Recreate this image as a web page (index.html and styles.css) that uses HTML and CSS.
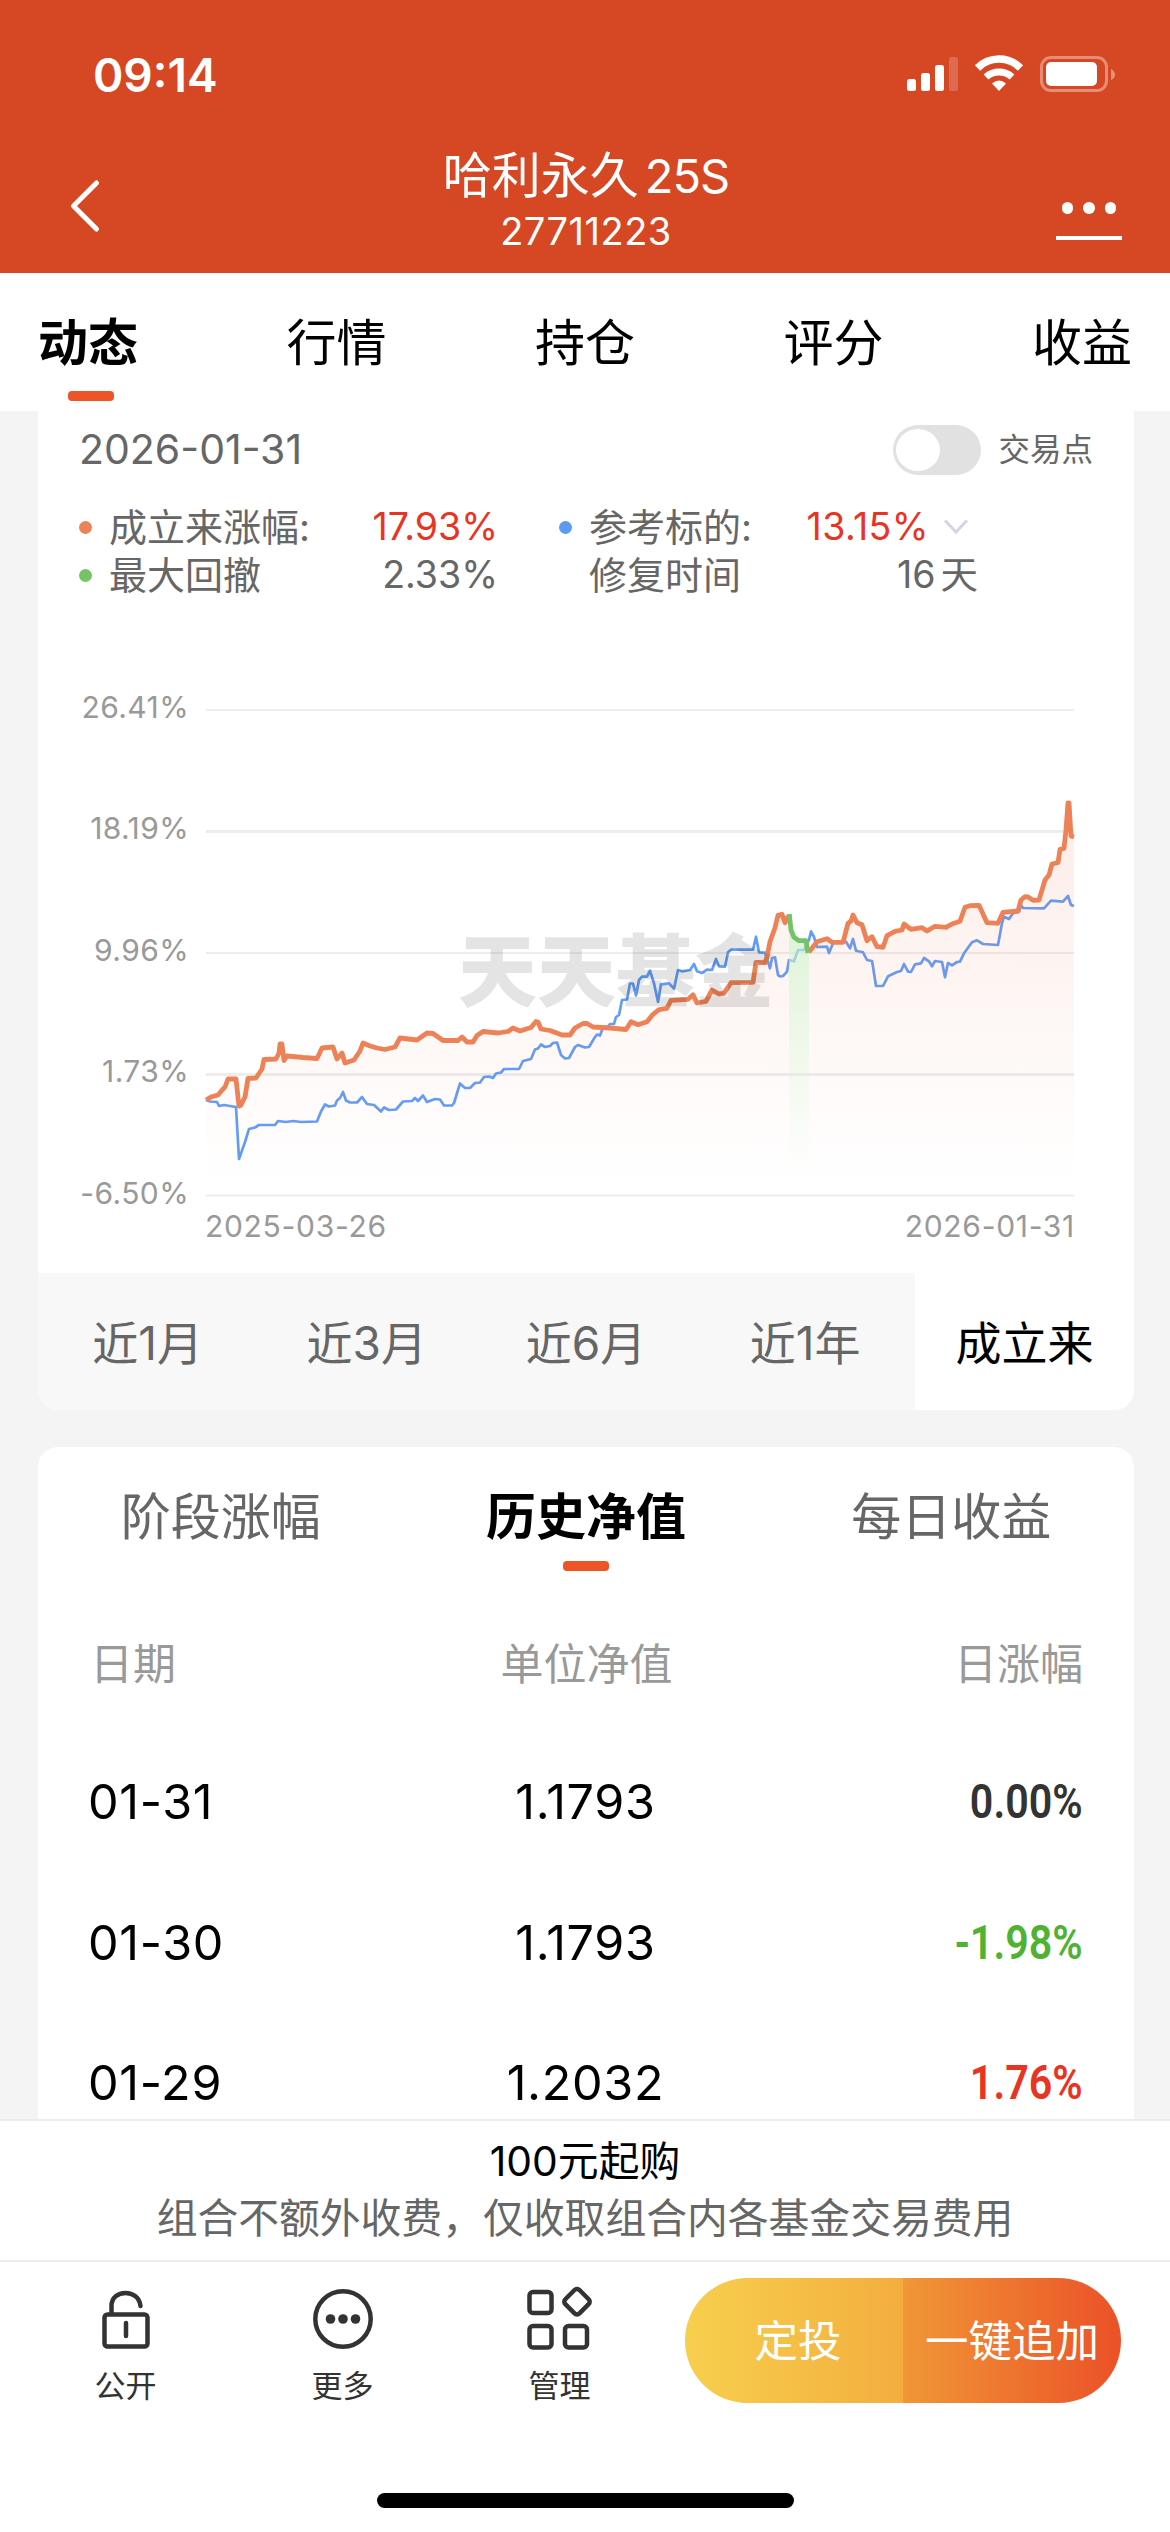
FILE: index.html
```html
<!DOCTYPE html>
<html lang="zh-CN">
<head>
    <meta charset="UTF-8">
    <meta name="viewport" content="width=device-width, initial-scale=1.0">
    <title>哈利永久25S</title>
    <link rel="stylesheet" href="styles.css">
</head>
<body>
    <header class="header">
        <div class="status-bar">
            <span class="time">09:14</span>
            <svg class="status-icons" width="210" height="44" viewBox="5 4 210 44">
                <g fill="#fff">
                    <rect x="7" y="29" width="9" height="12" rx="2.5"/>
                    <rect x="21" y="23" width="9" height="18" rx="2.5"/>
                    <rect x="35" y="15" width="9" height="26" rx="2.5"/>
                    <rect x="49" y="7" width="9" height="34" rx="2.5" opacity="0.2"/>
                    <path d="M92 33.5Q99 27.5 106 33.5L99 41Z"/>
                    <rect x="146" y="12" width="51" height="24" rx="5"/>
                    <path d="M211 19v11q4-2 4-5.500t-4-5.500z" opacity="0.4"/>
                </g>
                <g fill="none" stroke="#fff">
                    <path d="M77.500 18A30.200 30.200 0 0 1 120.500 18" stroke-width="7.500"/>
                    <path d="M86 27A19.300 19.300 0 0 1 112 27" stroke-width="7"/>
                    <rect x="141.500" y="7.500" width="65" height="33" rx="9.500" stroke-width="3" opacity="0.38"/>
                </g>
            </svg>
        </div>
        <div class="nav-bar">
            <svg class="back" width="34" height="56" viewBox="0 0 34 56">
                <path d="M28.500 5L5.500 28l23 23" fill="none" stroke="#fff" stroke-width="5" stroke-linecap="round" stroke-linejoin="round"/>
            </svg>
            <div class="nav-title">
                <div class="name">哈利永久<span class="suffix">25S</span></div>
                <div class="code">27711223</div>
            </div>
            <div class="more">
                <div class="more-dots"><i></i><i></i><i></i></div>
            </div>
        </div>
    </header>

    <nav class="tabs">
        <div class="tab active">动态</div>
        <div class="tab">行情</div>
        <div class="tab">持仓</div>
        <div class="tab">评分</div>
        <div class="tab">收益</div>
    </nav>

    <main class="content">
        <section class="card chart-card">
            <div class="date-row">
                <span class="date">2026-01-31</span>
                <span class="switch"></span>
                <span class="switch-label">交易点</span>
            </div>
            <div class="legend">
                <i class="dot orange"></i>
                <span>成立来涨幅:</span>
                <span class="value up">17.93%</span>
                <i class="dot blue"></i>
                <span>参考标的:</span>
                <span class="value up target">13.15%</span>
                <svg class="arrow" width="26" height="18" viewBox="0 0 26 18">
                    <path d="M2 2.500l11 11.500L24 2.500" fill="none" stroke="#d3d6e2" stroke-width="3"/>
                </svg>
                <i class="dot green"></i>
                <span>最大回撤</span>
                <span class="value">2.33%</span>
                <i></i>
                <span>修复时间</span>
                <span class="value days">16<b>天</b></span>
            </div>

            <svg class="chart" width="1096" height="573" viewBox="-168 0 1096 573">
                <defs>
                    <linearGradient id="areaFill" gradientUnits="userSpaceOnUse" x1="0" y1="100" x2="0" y2="485">
                        <stop offset="0" stop-color="#e8663a" stop-opacity="0.12"/>
                        <stop offset="1" stop-color="#e8663a" stop-opacity="0"/>
                    </linearGradient>
                    <linearGradient id="dropFill" gradientUnits="userSpaceOnUse" x1="0" y1="215" x2="0" y2="475">
                        <stop offset="0" stop-color="#ccf5cc" stop-opacity="0.7"/>
                        <stop offset="1" stop-color="#e0f8e0" stop-opacity="0"/>
                    </linearGradient>
                </defs>
                <g class="grid">
                    <path d="M0 10H868M0 253H868M0 495.500H868" stroke-width="2"/>
                    <path d="M0 131.500H868M0 374.500H868" stroke-width="3"/>
                </g>
                <g class="y-axis">
                    <text x="-17" y="18">26.41%</text>
                    <text x="-17" y="139">18.19%</text>
                    <text x="-17" y="261">9.96%</text>
                    <text x="-17" y="382">1.73%</text>
                    <text x="-17" y="504">-6.50%</text>
                </g>
                <g class="x-axis">
                    <text x="-1" y="537">2025-03-26</text>
                    <text x="869" y="537" text-anchor="end">2026-01-31</text>
                </g>
                <polyline class="line-index" points="0,400 4,401.500 11,402 13,406 18,405 30,407 33,459 39,442 43,429 49,427.500 53,425 69,425 72,421 80,422 87,421 95,422 111,421.500 115,411.500 119,404.500 123,406.500 129,405.500 131,400.500 134,398 137,392 140,400.500 144,402.500 151,402.500 156,397 161,404 168,405 175,411.500 178,407.500 183,410 190,409.500 197,401.500 206,401 209,398 212,401 217,395.500 221,402 229,399 234,399.500 238,405.500 246,405.500 248,403 254,383.500 259,388 264,388 269,383 274,382.500 278,377 283,376.500 287,378 290,373.500 295,372.500 298,369 313,369 317,361 325,359 329,349.500 332,348.500 335,344.500 339,347 344,346 347,343 351,342.500 355,355 359,358.500 363,358 369,347 372,345 379,347.500 383,347 389,337 391,334.500 394,335.500 397,327.500 402,326.500 404,324 408,324 410,317 413,315 416,300 421,299.500 424,283.500 427,283.500 430,295.500 433,280 436,276.700 441,276.700 444,270.700 448,283.300 452,302 455,284.300 463,283.300 468,288.700 472,270 476,271.300 484,270 488,264 491,271.300 496,273 501,269.700 506,270 510,259 513,266.300 519,266.700 522,252.300 525,249.700 547,249.700 550,236.700 553,252.300 559,252.700 564,268.300 566,258.300 569,257.300 572,275 574,276.300 577,276 581,271.700 583,260 588,261.300 592,250 598,250 601,243 603,240 605,231.300 608,237 611,247 621,246.700 623,253 627,243.300 631,242 640,241.700 644,248.300 647,239 650,250.700 657,252.300 661,260 666,261 667,266.700 670,286 677,286 682,276.300 691,272 695,271 698,264 702,271.700 705,272 709,264.300 715,263.300 718,258 723,261.300 726,266.300 729,261 736,262 739,277.300 742,263 746,265.300 751,262 754,261.700 758,253.300 766,242.300 771,240.300 777,244 792,245 796,223.300 798,216.700 803,219 807,213.300 813,211.700 815,205 817,208 838,208.300 845,200.700 857,201.700 862,196 865,205 868,206"/>
                <path fill="url(#areaFill)" d="M0 400L12 395 17 389 22 379 30 379 33 406 39 397 42 378 50 378 58 359 70 359 76 343 80 358 111 358 116 348 127 347 131 359 136 353 139 363 148 360 157 343 179 349 189 347 194 338 211 340 221 333 237 340 256 337 261 342 267 342 277 331 325 327 331 321 335 329 356 335 364 335 377 323 387 327 420 329 425 321 441 321 453 309 465 300 482 299 487 294 491 303 500 301 506 290 518 293 525 282 547 282 550 262 559 262 564 241 572 215 583 215 588 237 600 241 603 252 611 242 637 242 642 223 647 214 656 224 661 240 671 246 677 247 681 235 696 230 698 224 716 227 754 221 764 205 773 205 781 222 792 223 797 212 812 211 819 196 833 200 839 180 852 162 858 148 862 100 868 137V495H0Z"/>
                <path fill="url(#dropFill)" d="M583 215L588 237 600 241 603 252V495H583Z"/>
                <polyline class="line-fund" points="0,400 5,397 12,395 17,389 19,387 22,379 30,379 33,406 35,405 39,397 42,378.500 50,378 56,369 58,359.500 70,359 73,353 74,344 76,344 78,360.500 81,356 97,357.500 111,358.500 116,348 127,347 131,359 136,353 139,363 148,360 154,351 157,343 164,346 171,348 179,349.500 189,347 194,338 211,340 221,333 227,333.500 237,340.500 252,340.500 256,337 261,342 267,342 271,335.500 277,331.500 292,333 302,331.500 307,328 314,331 325,327.500 330,321.500 332,322 335,329 344,330.500 356,335 364,335 369,328 377,323.500 381,323.500 387,327 404,328 420,329.500 425,321.700 432,324.700 441,321.700 447,314.300 453,309.700 461,308.300 465,300.300 482,299.300 487,294.700 491,303 500,301.300 506,290 513,294 518,293.300 525,282.700 547,282.300 550,262.300 559,262.700 561,256.700 564,241.700 569,227.700 572,215.300 576,214.300 579,222.700 583,215.300"/>
                <polyline class="line-fund" points="603,252 611,241.700 621,238.700 626,242.300 637,242.300 642,223.300 645,221 647,215 651,222.700 656,224.700 661,240.700 666,236.700 671,246.700 677,247.300 681,235.700 689,231.300 696,230 698,224 705,229.300 716,227.700 721,231 729,226.300 740,227.300 746,224 754,221.300 759,207.300 764,205.700 773,205.300 776,211.700 781,222.700 792,223.300 797,212.300 812,211 815,200 819,196.700 822,197 827,200.300 833,200 839,180 843,175 846,164 852,162.700 854,149.300 858,148.300 860,130 862,103 863,103 865,136 868,137"/>
                <polyline class="line-drop" points="583.300,214 585,230 588,237.300 593,240.700 600,240.700 602,253"/>
                <text class="watermark" x="252" y="301">天天基金</text>
            </svg>

            <div class="ranges">
                <div class="range">近1月</div>
                <div class="range">近3月</div>
                <div class="range">近6月</div>
                <div class="range">近1年</div>
                <div class="range active">成立来</div>
            </div>
        </section>

        <section class="card history-card">
            <div class="sub-tabs">
                <div class="sub-tab">阶段涨幅</div>
                <div class="sub-tab active">历史净值</div>
                <div class="sub-tab">每日收益</div>
            </div>
            <div class="row row-head">
                <span>日期</span>
                <span>单位净值</span>
                <span>日涨幅</span>
            </div>
            <div class="row">
                <span>01-31</span>
                <span>1.1793</span>
                <span class="change">0.00%</span>
            </div>
            <div class="row">
                <span>01-30</span>
                <span>1.1793</span>
                <span class="change fall">-1.98%</span>
            </div>
            <div class="row">
                <span>01-29</span>
                <span>1.2032</span>
                <span class="change rise">1.76%</span>
            </div>
        </section>
    </main>

    <footer class="footer">
        <div class="notice">
            <div class="notice-main">100元起购</div>
            <div class="notice-sub">组合不额外收费，仅收取组合内各基金交易费用</div>
        </div>
        <div class="actions">
            <div class="action">
                <svg width="70" height="70" viewBox="0 0 70 70" fill="none" stroke="#333" stroke-width="4.500" stroke-linecap="round">
                    <rect x="13.500" y="30.500" width="43" height="32" rx="3"/>
                    <path d="M20.500 29V22C20.500 13.500 27 9 34.500 9C42 9 48.500 13.500 49.500 22M35 39v13"/>
                </svg>
                <span>公开</span>
            </div>
            <div class="action">
                <svg width="70" height="70" viewBox="0 0 70 70" fill="#333">
                    <circle cx="35" cy="35" r="27.700" fill="none" stroke="#333" stroke-width="4.500"/>
                    <circle cx="22.500" cy="35" r="4.800"/>
                    <circle cx="35" cy="35" r="4.800"/>
                    <circle cx="47.500" cy="35" r="4.800"/>
                </svg>
                <span>更多</span>
            </div>
            <div class="action">
                <svg width="70" height="70" viewBox="0 0 70 70" fill="none" stroke="#333" stroke-width="4.500">
                    <rect x="4.500" y="8" width="22" height="21" rx="3.500"/>
                    <rect x="4.500" y="42" width="22" height="21.500" rx="3.500"/>
                    <rect x="40" y="42" width="22" height="21.500" rx="3.500"/>
                    <rect x="42" y="7.700" width="20" height="20" rx="3.500" transform="rotate(45 52 17.700)"/>
                </svg>
                <span>管理</span>
            </div>
            <div class="buttons">
                <div class="btn btn-plan">定投</div>
                <div class="btn btn-add">一键追加</div>
            </div>
        </div>
        <div class="home-indicator"></div>
    </footer>
</body>
</html>
```
FILE: styles.css
```css
* {
    box-sizing: border-box;
}
body {
    margin: 0;
    width: 1170px;
    height: 2532px;
    overflow: hidden;
    display: flex;
    flex-direction: column;
    background: #f4f4f4;
    color: #000;
    font-family: Inter, "Noto Sans CJK SC", sans-serif;
}
svg {
    display: block;
}

/* header */
.header {
    height: 273px;
    flex: none;
    background: #d64724;
    color: #fff;
}
.status-bar {
    height: 140px;
    padding: 46px 55px 0 93px;
    display: flex;
    justify-content: space-between;
    align-items: flex-start;
}
.time {
    font-size: 46px;
    font-weight: 600;
    line-height: 58px;
}
.status-icons {
    margin-top: 8px;
}
.nav-bar {
    height: 133px;
    padding: 0 48px 0 68px;
    display: flex;
    justify-content: space-between;
}
.back {
    margin-top: 38px;
}
.nav-title {
    padding-left: 14px;
    text-align: center;
}
.name {
    font-size: 49px;
    line-height: 60px;
    margin-top: 6px;
}
.suffix {
    margin-left: 6px;
    font-size: 47px;
    letter-spacing: -1px;
}
.code {
    font-size: 38px;
    line-height: 50px;
    letter-spacing: 0.500px;
}
.more {
    width: 66px;
    height: 100px;
    border-bottom: 4px solid #fff;
}
.more-dots {
    padding-top: 62px;
    display: flex;
    justify-content: center;
    gap: 10px;
}
.more-dots i {
    width: 11.500px;
    height: 11.500px;
    border-radius: 50%;
    background: #fff;
}

/* top tabs */
.tabs {
    height: 138px;
    flex: none;
    padding: 0 38px;
    display: flex;
    justify-content: space-between;
    background: #fff;
}
.tab {
    width: 100px;
    padding-top: 35px;
    font-size: 50px;
    line-height: 70px;
    white-space: nowrap;
}
.tab.active,
.sub-tab.active {
    color: #000;
    font-weight: bold;
}
.tab.active::after,
.sub-tab.active::after {
    content: "";
    display: block;
    width: 46px;
    height: 10px;
    border-radius: 4px;
    background: #ed5428;
}
.tab.active::after {
    margin: 13px 0 0 30px;
}

.content {
    flex: 1;
    min-height: 0;
    overflow: hidden;
    padding: 0 36px 0 38px;
}
.card {
    background: #fff;
    overflow: hidden;
}

/* chart card */
.chart-card {
    height: 999px;
    border-radius: 0 0 20px 20px;
}
.date-row {
    height: 90px;
    padding: 14px 41px 0 41px;
    display: flex;
    align-items: flex-start;
    color: #666;
}
.date {
    flex: 1;
    font-size: 41px;
    line-height: 48px;
}
.switch {
    width: 88px;
    height: 50px;
    padding: 4px 3px;
    border-radius: 25px;
    background: #e1e1e1;
}
.switch::before {
    content: "";
    display: block;
    width: 44px;
    height: 42px;
    border-radius: 50%;
    background: #fff;
}
.switch-label {
    margin-left: 17px;
    font-size: 31.500px;
    line-height: 50px;
}
.legend {
    height: 199px;
    padding: 2px 0 0 41px;
    display: grid;
    grid-template-columns: 30px 220px 230px 30px 200px 154px 1fr;
    grid-auto-rows: 48px;
    align-items: center;
    align-content: start;
    font-size: 38px;
    line-height: 48px;
    color: #666;
    white-space: nowrap;
}
.value {
    padding-right: 61px;
    text-align: right;
    font-size: 37.500px;
}
.value.up {
    color: #e93323;
}
.value.target {
    padding-right: 14px;
    letter-spacing: 0.400px;
}
.value.days {
    grid-column: 6 / 8;
    padding-right: 156px;
}
.days b {
    margin-left: 5px;
    font-weight: normal;
}
.dot {
    width: 13px;
    height: 13px;
    border-radius: 50%;
}
.orange {
    background: #ee8257;
}
.blue {
    background: #5b9af7;
}
.green {
    background: #74c365;
}

.chart {
    overflow: visible;
}
.grid path {
    stroke: #ededed;
    fill: none;
}
.y-axis,
.x-axis {
    font-size: 30px;
    fill: #999;
}
.y-axis {
    text-anchor: end;
    letter-spacing: 0.400px;
}
.x-axis {
    letter-spacing: 0.700px;
}
.line-index,
.line-fund,
.line-drop {
    fill: none;
    stroke-linejoin: round;
}
.line-index {
    stroke: #639df5;
    stroke-width: 2.700;
}
.line-fund {
    stroke: #ee8257;
    stroke-width: 4.800;
}
.line-drop {
    stroke: #74c365;
    stroke-width: 4.800;
}
.watermark {
    font-family: "Noto Sans CJK SC", sans-serif;
    font-size: 79px;
    font-weight: 900;
    fill: #000;
    opacity: 0.100;
}

.ranges {
    height: 137px;
    display: grid;
    grid-template-columns: repeat(5, 1fr);
    background: #f8f8f8;
}
.range {
    text-align: center;
    font-size: 46px;
    line-height: 141px;
    color: #666;
}
.range.active {
    background: #fff;
    color: #000;
}

/* history card */
.history-card {
    height: 720px;
    margin-top: 37px;
    border-radius: 20px 20px 0 0;
}
.sub-tabs {
    height: 144px;
    display: grid;
    grid-template-columns: repeat(3, 1fr);
    text-align: center;
    font-size: 50px;
    line-height: 70px;
    color: #666;
}
.sub-tab {
    padding-top: 35px;
}
.sub-tab.active::after {
    margin: 9px auto 0;
}
.row {
    height: 140.500px;
    padding: 0 51px 0 50px;
    display: grid;
    grid-template-columns: 1fr 1fr 1fr;
    align-items: center;
    font-size: 48.500px;
    letter-spacing: 0.700px;
}
.row span:nth-child(2) {
    text-align: center;
}
.row span:nth-child(3) {
    text-align: right;
}
.row.row-head {
    padding-left: 52px;
    font-size: 43px;
    letter-spacing: 0;
    color: #999;
}
.change {
    font-family: Roboto, sans-serif;
    font-weight: 600;
    letter-spacing: 0;
    color: #333;
    transform: scaleX(0.850);
    transform-origin: right;
}
.change.fall {
    color: #4fb233;
}
.change.rise {
    color: #e93323;
}

/* footer */
.footer {
    height: 413px;
    flex: none;
    background: #fff;
    border-top: 2px solid #ececec;
}
.notice {
    height: 139px;
    padding-top: 12px;
    text-align: center;
    font-size: 40.800px;
    line-height: 57px;
}
.notice-sub {
    color: #666;
}
.actions {
    height: 233px;
    padding: 16px 0 0 17px;
    display: flex;
    align-items: flex-start;
    border-top: 2px solid #ececec;
}
.action {
    width: 217px;
    padding-top: 6px;
    display: flex;
    flex-direction: column;
    align-items: center;
    font-size: 31px;
    line-height: 40px;
    color: #333;
}
.action span {
    margin-top: 12px;
}
.buttons {
    width: 436px;
    height: 125px;
    margin-left: 17px;
    display: flex;
    border-radius: 63px;
    overflow: hidden;
    color: #fff;
    font-size: 43.500px;
    line-height: 127px;
    text-align: center;
}
.btn {
    width: 218px;
    white-space: nowrap;
}
.btn-plan {
    padding-left: 8px;
    background: linear-gradient(to right, #f7cf4e, #f3ae3e);
}
.btn-add {
    background: linear-gradient(to right, #f09737, #eb5127);
}
.home-indicator {
    width: 417px;
    height: 15px;
    margin: 0 auto;
    border-radius: 8px;
    background: #000;
}
```
